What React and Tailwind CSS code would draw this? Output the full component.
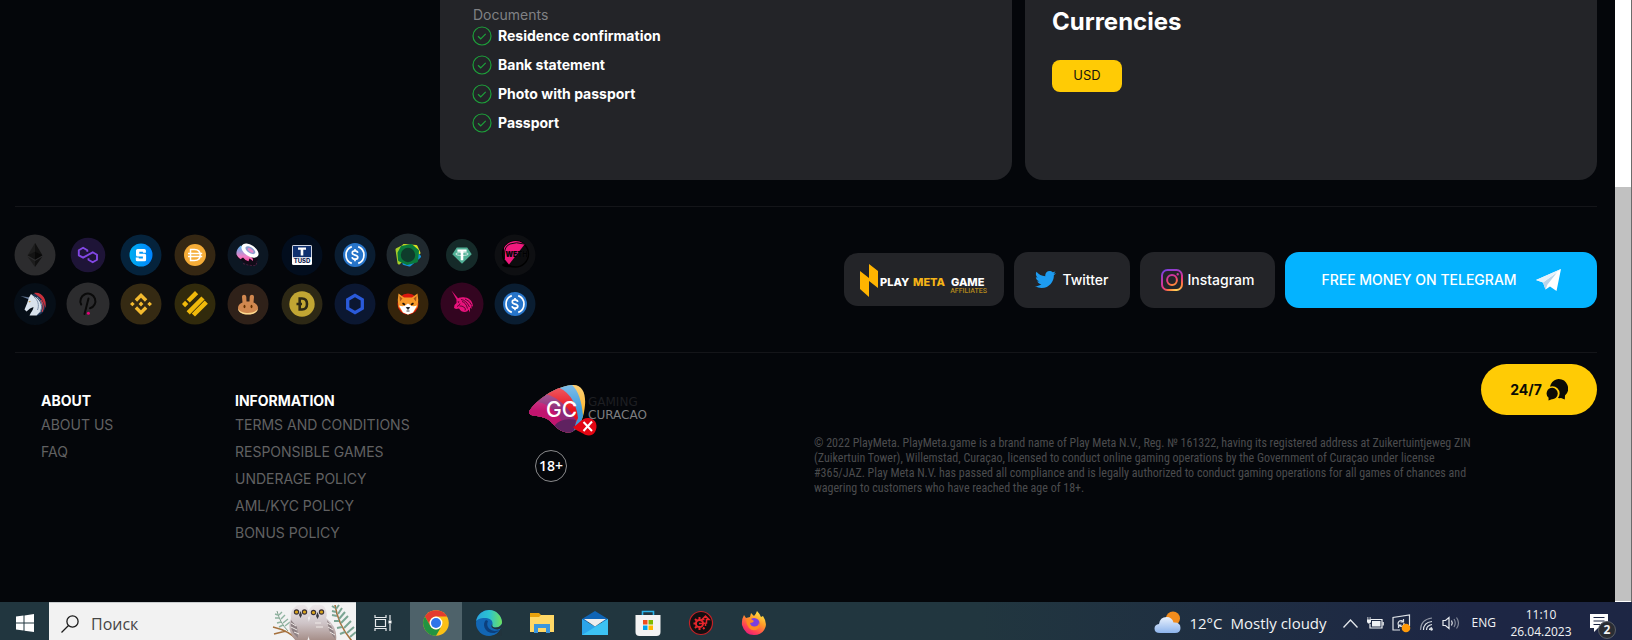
import React from "react";
import { FaTwitter } from "react-icons/fa";

const documents = [
  "Residence confirmation",
  "Bank statement",
  "Photo with passport",
  "Passport",
];

const aboutLinks = ["ABOUT US", "FAQ"];

const infoLinks = [
  "TERMS AND CONDITIONS",
  "RESPONSIBLE GAMES",
  "UNDERAGE POLICY",
  "AML/KYC POLICY",
  "BONUS POLICY",
];

const UsdcMark = () => (
  <g>
    <circle r="12" fill="#2775ca" />
    <g fill="none" stroke="#fff" strokeWidth="1.7">
      <path d="M-3.2-8.4a9 9 0 0 0 0 16.8M3.2-8.4a9 9 0 0 1 0 16.8" />
      <path d="M2.7-2.2C2.5-3.6 1.4-4.1 0-4.1c-1.600 0-2.700.7-2.700 2C-2.700.8 2.800-.6 2.800 2.200c0 1.300-1.200 2-2.800 2s-2.700-.7-2.900-2.100M0-6v2M0 4v2.200" />
    </g>
  </g>
);

// Every mark is drawn around 0,0
const coins = [
  {
    name: "Ethereum",
    bg: "#2c2c2e",
    r: 20.5,
    mark: (
      <g>
        <path d="M0-12 7.300.2 0 4.500-7.300.2Z" fill="#1d1d1d" />
        <path d="M0-12 7.300.2 0 4.500Z" fill="#111" />
        <path d="M0-3.200 7.300.2 0 4.500Z" fill="#080808" />
        <path d="M0-3.200-7.300.2 0 4.500Z" fill="#131313" />
        <path d="M-7.300 1.800 0 6.100V12Z" fill="#1d1d1d" />
        <path d="M7.300 1.800 0 6.100V12Z" fill="#111" />
      </g>
    ),
  },
  {
    name: "Polygon",
    bg: "#1e1437",
    r: 17.3,
    mark: (
      <g fill="none" stroke="#8247e5" strokeWidth="1.900" strokeLinejoin="round">
        <path d="M-.7-3.200V-4.700L-4.900-7.200-9.200-4.700V.3L-4.900 2.700 4.700-2.700 9 -.2V4.800L4.700 7.300.5 4.800V3.200" />
      </g>
    ),
  },
  {
    name: "The Sandbox",
    bg: "#05233c",
    r: 20.5,
    mark: (
      <g>
        <circle r="11.500" fill="url(#sand)" />
        <path
          d="M4.900-2.200H1.900V-3.300H-1.700V-1.300H3.600Q5.100-1.300 5.100.3V4.700Q5.100 6.300 3.500 6.300H-3.600Q-5.200 6.300-5.200 4.700V2.400H-2.200V3.600H1.900V1.500H-3.400Q-5 1.500-5-.1V-4.600Q-5-6.100-3.400-6.100H3.300Q4.900-6.100 4.900-4.600Z"
          fill="#fff"
        />
      </g>
    ),
  },
  {
    name: "Dai",
    bg: "#352713",
    r: 20.5,
    mark: (
      <g>
        <circle r="11" fill="#f5ac37" />
        <path
          d="M-4.500-5.500H-.5Q5.200-5.500 5.200 0T-.5 5.500H-4.500ZM-7-1.500H7.200M-7 1.500H7.200"
          fill="none"
          stroke="#fff"
          strokeWidth="1.500"
        />
      </g>
    ),
  },
  {
    name: "Sushi",
    bg: "#0c1723",
    r: 20.5,
    mark: (
      <g>
        <path
          d="M-10.500-2.500C-8-7 2 0 10 3L8 9.500C5 12 0 10.500-3 8L-11.500 2Z"
          fill="#120b18"
        />
        <path
          d="M-11.500-.5C-12-5-9-8-7-9.500L5 4 5 6 1.500 3.500.5 6.200-2.500 5-5 2.500-7.500 4.200-10 2Z"
          fill="url(#sushi)"
        />
        <ellipse rx="9.600" ry="5.600" cx="2" cy="-4.300" transform="rotate(34 2 -4.300)" fill="#fff" />
        <ellipse rx="5.600" ry="2.900" cx="2.400" cy="-4.800" transform="rotate(34 2.400 -4.800)" fill="#8b9ccf" />
        <ellipse rx="3.300" ry="1.500" cx="2.600" cy="-4.600" transform="rotate(34 2.600 -4.600)" fill="#e889c8" />
        <path d="M-5 8.500Q2 11 8 10.500L9 6" fill="none" stroke="#5d2148" strokeWidth=".8" strokeDasharray="2 1.500" />
      </g>
    ),
  },
  {
    name: "TrueUSD",
    bg: "#020d1d",
    r: 20.5,
    mark: (
      <g>
        <rect x="-10" y="-10" width="20" height="20" rx="1.500" fill="#fff" />
        <path d="M-9.200-9.200H9.200V2.200H-9.200Z" fill="#10316f" />
        <path d="M-4-7.500H4V-5.200H1.300V.6H-1.300V-5.200H-4Z" fill="#fff" />
        <text
          y="8"
          textAnchor="middle"
          className="font-['Inter',sans-serif] text-[6px] font-extrabold"
          fill="#10244f"
        >
          TUSD
        </text>
      </g>
    ),
  },
  { name: "USD Coin", bg: "#0a1d31", r: 20.5, mark: <UsdcMark /> },
  {
    name: "Pax Dollar",
    bg: "#20292f",
    r: 21.5,
    mark: (
      <g strokeLinejoin="round" strokeWidth="3">
        <path d="M-4-9.500 8-8.500 11-2-5-3Z" fill="#d9e021" stroke="#d9e021" />
        <path d="M-11-5.500-4-9-6 5-9 8Z" fill="#a6cf2a" stroke="#a6cf2a" />
        <path d="M11.500 1.500 1.500 10-4 8.500 6-4Z" fill="#1594d8" stroke="#1594d8" />
        <path d="M-6-7.500 3-9.500 9.500-4 8.500 6-1 8.500-8.500 5-9-2Z" fill="#0b7a3c" stroke="#0b7a3c" />
        <circle r="7.200" fill="#0e3c2b" />
      </g>
    ),
  },
  {
    name: "Tether",
    bg: "#152a29",
    r: 16,
    mark: (
      <g>
        <path d="M-5.200-7.500H5.200L9.700-.8 0 8.700-9.700-.8Z" fill="#50af95" />
        <path d="M-4.600-5.600H4.600V-3.200H1.300V5.200H-1.300V-3.200H-4.600Z" fill="#fff" />
        <ellipse cy="-1" rx="6.300" ry="1.500" fill="none" stroke="#fff" strokeWidth=".7" />
      </g>
    ),
  },
  {
    name: "WETH",
    bg: "#0e0f12",
    r: 20.5,
    mark: (
      <g>
        <ellipse cx="-5" cy="10" rx="8" ry="2.300" fill="#000" />
        <circle cx=".5" cy="-1" r="13" fill="#0c0c0e" stroke="#000" strokeWidth="1.400" />
        <path d="M9.500-10.500A13 13 0 0 0-11-7L-10.500 4-6 9.500Z" fill="#f0197d" />
        <path d="M9-11Q1-13.500-5-11T-10.500 0V4" fill="none" stroke="#0a0a0c" strokeWidth="1" />
        <text
          x="1.500"
          y="1.800"
          textAnchor="middle"
          className="font-['Inter',sans-serif] text-[7px] font-black"
          fill="#000"
          stroke="#24242a"
          strokeWidth=".2"
        >
          WETH
        </text>
      </g>
    ),
  },
  {
    name: "1inch",
    bg: "#060e17",
    r: 21,
    mark: (
      <g>
        <path d="M-14.500-8-6-4.500-5-6.500Z" fill="#5f7390" />
        <path d="M-3-9.500C4-13 11-7 10.500 1S5 11.500 1 11.500C7 6 5-3-3-9.500Z" fill="#1d3252" />
        <path d="M-1-11C7-12.500 12-5 10.500 4 9 0 8-5 3-8Z" fill="#c92f3a" />
        <path d="M-6-6.500-4-10-1-7.500C5-5 7.500 1 5.500 7.500L1.500 11.500H-5.500C-4 8-1.500 6-1.500 3L-5 4.500-8.500 7.500-10.500 5.500-8-.5Z" fill="#d9e2ec" />
        <path d="M-1-7C3-4 4.500 1 2.500 6M2-7C7-3 8 2 5 8.500" fill="none" stroke="#8294ad" strokeWidth="1" />
        <path d="M-6.500-3-4-2.500-5.500-1.500Z" fill="#c58b2d" />
        <path d="M6-4Q10 2 7 8" fill="none" stroke="#e6434c" strokeWidth="1" />
      </g>
    ),
  },
  {
    name: "Polkadot",
    bg: "#2c2c2e",
    r: 21.5,
    mark: (
      <g>
        <path
          d="M-6.800.5A7.500 7.500 0 1 1 2 4.300M.5-5.500-3.500 10"
          fill="none"
          stroke="#0a0a0a"
          strokeWidth="2"
          strokeLinecap="round"
        />
        <circle cx=".4" cy="9.300" r="1.500" fill="#e6007a" />
      </g>
    ),
  },
  {
    name: "BNB",
    bg: "#352a13",
    r: 20.5,
    mark: (
      <g fill="#f3ba2f">
        <path d="M0-11 6.300-4.700 3.900-2.300 0-6.200-3.900-2.300-6.300-4.700Z" />
        <path d="M0 11 6.300 4.700 3.900 2.300 0 6.200-3.900 2.300-6.300 4.700Z" />
        <path d="M-8.600-2.300-6.300 0-8.600 2.300-11 0ZM8.600-2.300 11 0 8.600 2.300 6.300 0ZM0-2.400 2.400 0 0 2.400-2.400 0Z" />
      </g>
    ),
  },
  {
    name: "Binance USD",
    bg: "#312a0c",
    r: 20.5,
    mark: (
      <g fill="#f0b90b">
        <path d="M0-13 3.200-9.800-5.200-1.400-8.400-4.600ZM6.400-7.600 9.600-4.400-5.200 10.400-8.400 7.200ZM-9.900-3.200-6.700 0-9.900 3.200-13 0Z" />
        <path d="M9.700-3.500 12.900-.3 0 12.600-3.200 9.400Z" />
      </g>
    ),
  },
  {
    name: "PancakeSwap",
    bg: "#2f2119",
    r: 20.5,
    mark: (
      <g>
        <path
          d="M-6-7C-6-10-2-10-1.700-7L-1.500-2.500H1.500L1.700-7C2-10 6-10 6-7L5.500-1.500C8.500-.5 10 1.500 10 4 10 8 5.500 10.300 0 10.300S-10 8-10 4C-10 1.500-8.500-.5-5.500-1.500Z"
          fill="#d1884f"
        />
        <path d="M-10 4.500C-8 8-4 9-0 9S8 8 10 4.500C9.500 8.500 5.500 10.500 0 10.500S-9.500 8.500-10 4.500Z" fill="#fedc90" />
        <ellipse cx="-3.500" cy="2.500" rx="1" ry="1.700" fill="#633001" />
        <ellipse cx="3.500" cy="2.500" rx="1" ry="1.700" fill="#633001" />
      </g>
    ),
  },
  {
    name: "Dogecoin",
    bg: "#2d2815",
    r: 20.5,
    mark: (
      <g>
        <circle r="12.700" fill="#c2a633" />
        <path d="M-2.300-5.500H0Q5-5.500 5 0T0 5.500H-2.300ZM-5.500 0H0" fill="none" stroke="#2d2815" strokeWidth="2.600" />
      </g>
    ),
  },
  {
    name: "Chainlink",
    bg: "#0b1731",
    r: 20.5,
    mark: (
      <path d="M0-8.600 7.300-4.300V4.300L0 8.600-7.300 4.300V-4.300Z" fill="none" stroke="#2a5ada" strokeWidth="3.300" />
    ),
  },
  {
    name: "Shiba Inu",
    bg: "#35240b",
    r: 20.5,
    mark: (
      <g>
        <circle r="10.500" fill="#d9180f" />
        <path d="M-9.500-10.500-4-6.500H4L9.500-10.500Q11-4 9.500 3L5 8.500 0 10.500-5 8.500-9.500 3Q-11-4-9.500-10.500Z" fill="#f79a2a" />
        <path d="M-8.500-8-5.500-5.500-8-2.500ZM8.500-8 5.500-5.500 8-2.500Z" fill="#a8561a" />
        <path d="M-9 1.500Q-5 3-2.800 1.500L0-.5 2.800 1.500Q5 3 9 1.500L5 8.500 0 10.500-5 8.500Z" fill="#fff" />
        <path d="M-5.500-.8-3 .8M5.500-.8 3 .8" stroke="#1c1008" strokeWidth="1.700" />
        <path d="M-1.600 3.500H1.600L0 5.500ZM-1.500 7H1.500" fill="#111" stroke="#111" strokeWidth=".8" />
      </g>
    ),
  },
  {
    name: "Uniswap",
    bg: "#330520",
    r: 21.5,
    mark: (
      <g>
        <path d="M-10.500-13.500-3-4.500-5-3.500Z" fill="#e8127c" />
        <path
          d="M-5.500-4C-3.500-7 0-7 3-6.500 8-6 11-2 11 3L9.500 1 9.500 5 8 3.500 8 8.500 6.500 5.500Q6 7.500 3 8-1 8-3 4.500L-6 5-8 4-7.500 1-5.500-1Z"
          fill="#e8127c"
        />
        <path
          d="M-1-4.500Q4-4 7.500 3M0-2.500Q4-1.500 5.500 4.500M3-5Q8-3 9.500 1M-2.500 2Q0 1.500 2.500 3.500Q4 5 3 6.500M-5 2.500Q-3 2-2-.5"
          fill="none"
          stroke="#330520"
          strokeWidth=".8"
        />
        <path d="M-4.500-2.500H-2.500L-3.500-1Z" fill="#330520" />
      </g>
    ),
  },
  { name: "USD Coin bridged", bg: "#0a1d31", r: 20.5, mark: <UsdcMark /> },
];

const CheckCircle = () => (
  <svg className="h-5 w-5 shrink-0" viewBox="0 0 20 20" fill="none" stroke="#1da03a">
    <circle cx="10" cy="10" r="9" strokeWidth="1.200" />
    <path d="m6 10.200 2.700 2.600 5-5" strokeWidth="1.200" />
  </svg>
);

const Coins = () => (
  <div className="-ml-[7px] grid w-[534px] grid-cols-10 justify-items-center gap-y-[5px]">
    <svg className="absolute h-0 w-0">
      <defs>
        <linearGradient id="sand" x1="0" x2="1">
          <stop offset="0" stopColor="#00adef" />
          <stop offset="1" stopColor="#0084ff" />
        </linearGradient>
        <linearGradient id="sushi" x1="0" x2="0" y1="0" y2="1">
          <stop offset="0" stopColor="#4fb7f0" />
          <stop offset=".7" stopColor="#f07fc6" />
          <stop offset="1" stopColor="#fa52a0" />
        </linearGradient>
      </defs>
    </svg>
    {coins.map((coin) => (
      <svg key={coin.name} className="h-11 w-11" viewBox="-22 -22 44 44" role="img" aria-label={coin.name}>
        <circle r={coin.r} fill={coin.bg} />
        {coin.mark}
      </svg>
    ))}
  </div>
);

const AffiliatesLogo = () => (
  <svg className="h-[38px] w-32" viewBox="0 0 128 38">
    <path d="M0 10 9 17 9 3 18 10V27L9 20V36L0 28Z" fill="#ffb400" />
    <g className="font-['Inter',sans-serif] text-[11px] font-extrabold">
      <text x="20" y="25" fill="#fff">PLAY</text>
      <text x="53" y="25" fill="#f5b417">META</text>
      <text x="91" y="25" fill="#fff">GAME</text>
    </g>
    <text x="127" y="32" textAnchor="end" fill="#b58a1c" className="font-['Roboto',sans-serif] text-[7px] font-medium">
      AFFILIATES
    </text>
  </svg>
);

const InstagramIcon = () => (
  <svg className="h-[22px] w-[22px]" viewBox="0 0 22 22" fill="none" stroke="url(#insta)" strokeWidth="2">
    <defs>
      <radialGradient id="insta" gradientUnits="userSpaceOnUse" cx="16" cy="22" r="24">
        <stop offset="0" stopColor="#ffdc5c" />
        <stop offset=".35" stopColor="#ff7a3d" />
        <stop offset=".6" stopColor="#e6358a" />
        <stop offset="1" stopColor="#7a3fe0" />
      </radialGradient>
    </defs>
    <rect x="1" y="1" width="20" height="20" rx="5.500" />
    <circle cx="11" cy="11" r="4.900" />
    <circle cx="16.700" cy="5.300" r=".6" strokeWidth="1.200" />
  </svg>
);

const TelegramPlane = () => (
  <svg className="h-6 w-[26px]" viewBox="0 0 26 24">
    <path d="M1 12 26 1 21.500 23 15 18.500 10.500 21.500 8 14.500Z" fill="#fff" />
    <path d="M8 14.500 22 4.500 12.500 16.500 10.500 21.500Z" fill="#b9d4ea" />
    <path d="M1 12 26 1 8 14.500Z" fill="#e6f1fa" />
  </svg>
);

const ChatIcon = () => (
  <svg className="h-[22px] w-[22px]" viewBox="0 0 22 22">
    <path d="M12.500 0A9.500 9.500 0 0 1 19 16.500L18.800 20.500 15 19Q9 20 5 14A9.500 9.500 0 0 1 12.500 0Z" fill="#0b0b05" />
    <circle cx="6.300" cy="14.500" r="7.300" fill="#ffcb05" />
    <path d="M6.300 8.800A5.700 5.700 0 1 1 5.800 20.200L2.500 21.500 2.600 18.800A5.700 5.700 0 0 1 6.300 8.800Z" fill="#0b0b05" />
  </svg>
);

const GamingCuracao = () => (
  <svg className="h-[54px] w-[130px]" viewBox="0 0 130 54" role="img" aria-label="Gaming Curacao">
    <defs>
      <clipPath id="gc">
        <path d="M0 28C3 21 22 3 43 1 53 0 57 9 56 21 55 32 52 43 43 48 34 50 27 44 21 37 13 30 0 34 0 28Z" />
      </clipPath>
      <linearGradient id="shine" x1="0" x2="0" y1="0" y2="1">
        <stop offset="0" stopColor="#fff" stopOpacity=".35" />
        <stop offset=".5" stopColor="#fff" stopOpacity="0" />
      </linearGradient>
    </defs>
    <g clipPath="url(#gc)">
      <path d="M0 0H60V54H0Z" fill="#fdb933" />
      <path d="M0 0H42Q52 8 54 32L48 54H0Z" fill="#3d9bdd" />
      <path d="M0 0H20Q46 6 49 34L40 54H0Z" fill="#e8111c" />
      <path d="M0 10H17Q34 15 47 36L42 54H0Z" fill="#8e2a77" />
      <path d="M0 18H9Q30 22 40 54H0Z" fill="#c2146f" />
      <path d="M25 42Q32 33 47 36L44 54H26Z" fill="#5f2260" />
      <path d="M0 0H60V54H0Z" fill="url(#shine)" />
    </g>
    <path d="M44 43C50 40 53 33 60 34 68 35 69 43 66 48 62 54 56 51 53 49 50 47 46 46 44 43Z" fill="#e30613" />
    <path d="m54.500 38 8.500 9M63 37.500 54.500 47" stroke="#fff" strokeWidth="2" fill="none" />
    <text x="17" y="33" fill="#fff" className="font-['Inter',sans-serif] text-[21px] font-medium">GC</text>
    <g className="font-['DejaVu_Sans',sans-serif] text-xs">
      <text x="59" y="22" fill="#1e1f22">GAMING</text>
      <text x="59" y="35" fill="#7d7e80">CURACAO</text>
    </g>
  </svg>
);

const FooterColumn = ({ title, links, className }) => (
  <div className={className}>
    <h3 className="text-sm leading-5 font-bold text-white">{title}</h3>
    <ul>
      {links.map((link) => (
        <li key={link} className="flex h-[27px] items-center">
          <a href="#" className="text-sm leading-5 text-[#616162] hover:text-white">
            {link}
          </a>
        </li>
      ))}
    </ul>
  </div>
);

const Owls = () => (
  <svg className="h-[38px] w-[84px] self-start" viewBox="0 0 84 38">
    <defs>
      <linearGradient id="owl" x1="0" x2="0" y1="0" y2="1">
        <stop offset="0" stopColor="#ece8ea" />
        <stop offset=".5" stopColor="#cfc5c8" />
        <stop offset="1" stopColor="#a48c86" />
      </linearGradient>
    </defs>
    <path d="M1 24Q18 28 26 38M2 31 14 28" stroke="#a5713d" strokeWidth="1.600" fill="none" />
    <path d="M5 8Q8 20 16 28" stroke="#7f9f8b" fill="none" />
    <path
      d="M6 12 3 11M7 15 3 15M9 19 5 20M11 22 7 24M7 12 10 9M9 16 13 12M11 20 16 16M13 23 18 19"
      stroke="#8fb3a0"
      strokeWidth="1.400"
    />
    <path d="M22 5Q25 1 29 2 34 1 36 6 39 11 36 15 40 28 35 38H24Q14 27 19 15 18 8 22 5Z" fill="url(#owl)" />
    <path d="M38 5Q41 1 45 2 51 1 53 5 56 11 54 15 66 24 64 38H38Q33 26 38 15 35 9 38 5Z" fill="url(#owl)" />
    <path d="M19 17Q17 28 26 35L25 24ZM55 17Q62 25 63 36L57 27Z" fill="#8d8083" />
    <path d="M19 20 24 23M19 24 25 27M22 29 27 31M55 20 59 22M56 24 61 27M58 29 63 32M43 20H49M44 24H51" stroke="#efe9e6" />
    <g fill="#3b3136">
      <circle cx="24.500" cy="9" r="2.700" />
      <circle cx="32.500" cy="9" r="2.700" />
      <circle cx="41.500" cy="9.500" r="2.700" />
      <circle cx="49.500" cy="9" r="2.700" />
    </g>
    <g fill="#d9a51c">
      <circle cx="24.500" cy="9" r="1.600" />
      <circle cx="32.500" cy="9" r="1.600" />
      <circle cx="41.500" cy="9.500" r="1.600" />
      <circle cx="49.500" cy="9" r="1.600" />
    </g>
    <path d="m28.500 8-1.500 4 1.500 3 1.500-3ZM45.500 9l-1.500 4 1.500 3 1.500-3Z" fill="#3a3a42" />
    <path d="M63 2Q66 22 80 38" stroke="#a5713d" strokeWidth="1.600" fill="none" />
    <path
      d="M63 5 60 3M64 9 60 8M65 13 60 12M67 18 62 18M70 24 65 25M73 29 68 31M64 6 67 2M66 11 70 5M67 16 73 9M69 20 76 13M72 25 79 18M75 30 82 24M78 34 84 29"
      stroke="#7ba593"
      strokeWidth="2"
    />
  </svg>
);

const taskbarApps = [
  {
    name: "Microsoft Edge",
    icon: (
      <svg className="h-[26px] w-[26px]" viewBox="0 0 26 26">
        <defs>
          <linearGradient id="edgeTop" x1="0" x2="1">
            <stop offset="0" stopColor="#2aa5dd" />
            <stop offset=".5" stopColor="#2bc3d2" />
            <stop offset="1" stopColor="#6fe05c" />
          </linearGradient>
        </defs>
        <circle cx="13" cy="13" r="13" fill="#1266b4" />
        <path d="M.2 11A13 13 0 0 1 26 12C26 16 22 18 18.500 17.500 15 17 15.500 15.500 16.500 13.500 17 9.500 12 7.500 7 8 3 8.500 1 10 .2 11Z" fill="url(#edgeTop)" />
        <path d="M10 10Q7 13 8.500 17.500 11 23.500 18.500 23 22 22 23.500 20 17 22.500 13 18.500 10 15 12 11Z" fill="#0c3f7c" />
        <path d="M16.500 13.500Q13.500 17.500 18.500 19T26 17V14Q23 18 18.500 17.500 15.500 17 16.500 13.500Z" fill="#22343d" />
        <path d="M25 18Q22 25 15 26L23 26H26Z" fill="#22343d" />
      </svg>
    ),
  },
  {
    name: "File Explorer",
    icon: (
      <svg className="h-[26px] w-[26px]" viewBox="0 0 26 26">
        <path d="M1 3H10L12 5H25V21H1Z" fill="#e8a20c" />
        <path d="M1 7H10L12 5H25V22H1Z" fill="#ffd866" />
        <path d="M5 14H21V23H17V18H9V23H5Z" fill="#3a96dd" />
      </svg>
    ),
  },
  {
    name: "Mail",
    icon: (
      <svg className="h-[26px] w-[26px]" viewBox="0 0 26 26">
        <path d="M0 9 13 1 26 9V12H0Z" fill="#0f64b5" />
        <path d="M0 9 13 16.500 26 9V25H0Z" fill="#2ba5ea" />
        <path d="M26 9V25H0Z" fill="#3cc3f4" />
        <path d="M2 9H24L13 16.500Z" fill="#eee" />
      </svg>
    ),
  },
  {
    name: "Microsoft Store",
    icon: (
      <svg className="h-[26px] w-[26px]" viewBox="0 0 26 26">
        <path d="M7.500 6V1.500H18.500V6" fill="none" stroke="#2bb4ea" strokeWidth="1.600" />
        <path d="M0.500 5H25.500V22Q25.500 26 21.500 26H4.500Q.5 26 .5 22Z" fill="#f3f3f3" />
        <path d="M8 10H12.500V14.500H8Z" fill="#f04e1f" />
        <path d="M13.500 10H18V14.500H13.500Z" fill="#7eba00" />
        <path d="M8 15.500H12.500V20H8Z" fill="#00a3ee" />
        <path d="M13.500 15.500H18V20H13.500Z" fill="#ffb800" />
      </svg>
    ),
  },
  {
    name: "Control Center",
    icon: (
      <svg className="h-[26px] w-[26px]" viewBox="0 0 26 26">
        <circle cx="13" cy="13" r="11.500" fill="#120f11" stroke="#c32227" strokeWidth="1.200" />
        <circle cx="11.500" cy="13.500" r="3.600" fill="none" stroke="#e8262c" strokeWidth="2" />
        <path
          d="M11.500 7V9.500M11.500 17.500V20M5.500 13.500H7.500M7 9 8.600 10.500M7 18 8.600 16.500M15 17.500 16.500 19"
          stroke="#e8262c"
          strokeWidth="2"
        />
        <path d="M11 13.500H14L18.500 13V9.500H21L17.500 6 14 9.500H16.500M17.500 13V16" fill="none" stroke="#e8262c" strokeWidth="1.500" />
      </svg>
    ),
  },
  {
    name: "Firefox",
    icon: (
      <svg className="h-[26px] w-[26px]" viewBox="0 0 26 26">
        <defs>
          <linearGradient id="fox" x1=".8" x2=".2" y1="0" y2="1">
            <stop offset="0" stopColor="#fff14a" />
            <stop offset=".4" stopColor="#ff9a28" />
            <stop offset=".75" stopColor="#ff4055" />
            <stop offset="1" stopColor="#e11586" />
          </linearGradient>
        </defs>
        <path d="M3 5 5 8 9 7 10 3 13 6Q15 4 16 1 19 4 20 7L22 6Q26 12 24.500 17 22 25 13 25T1 15Q.500 9 3 5Z" fill="url(#fox)" />
        <circle cx="13" cy="13.500" r="5.600" fill="#7a3fe0" />
        <path d="M5 9 10 9 13 11Q12 13 9 13 10 17 14 16.500 18 16 18 12 20 16 17 19 12 22 8 18 5 14 5 9Z" fill="#ff8a20" />
      </svg>
    ),
  },
];

const ChromeIcon = () => (
  <svg className="h-[26px] w-[26px]" viewBox="-13 -13 26 26">
    <circle r="12.800" fill="#fbc016" />
    <path d="M-11.100-6.400A12.800 12.800 0 0 1 11.100-6.400H0A6.400 6.400 0 0 0-5.500 3.200Z" fill="#e33b2e" />
    <path d="M-11.100-6.400A12.800 12.800 0 0 0 0 12.800L5.500 3.200A6.400 6.400 0 0 1-5.500 3.200Z" fill="#229342" />
    <circle r="6.400" fill="#fff" />
    <circle r="5" fill="#2f74e8" />
  </svg>
);

const Taskbar = () => (
  <footer className="flex h-[38px] shrink-0 items-center overflow-hidden bg-linear-to-r from-[#21363f] from-60% to-[#1d2644] to-90% font-['Open_Sans','Noto_Sans',sans-serif] text-[#f1f3f5]">
    <button aria-label="Start" className="flex h-full w-[49px] items-center justify-center">
      <svg className="mt-1 h-[18px] w-[18px]" viewBox="0 0 18 18" fill="#fff">
        <path d="M0 2.600 7.500 1.500V8.600H0ZM8.500 1.400 18 0V8.600H8.500ZM0 9.500H7.500V16.500L0 15.500ZM8.500 9.500H18V18L8.500 16.700Z" />
      </svg>
    </button>
    <label className="flex h-full w-[307px] items-center border-t border-[#c9cdcf] bg-[#f2f2f2] pl-3">
      <svg className="mt-1 h-[18px] w-[18px]" viewBox="0 0 18 18" fill="none" stroke="#1c1c1c" strokeWidth="1.300">
        <circle cx="11.500" cy="6.500" r="5.600" />
        <path d="M7.500 10.500.5 17.500" />
      </svg>
      <input
        type="text"
        aria-label="Поиск"
        placeholder="Поиск"
        className="mt-1 ml-3 w-0 flex-1 bg-transparent text-base text-black outline-none placeholder:text-[#454545]"
      />
      <Owls />
    </label>
    <button aria-label="Task view" className="flex h-full w-[54px] items-center justify-center">
      <svg className="mt-1 h-[18px] w-[18px]" viewBox="0 0 18 18" fill="none" stroke="#e6eaec" strokeWidth="1.200">
        <path d="M1 1V3.500H12V1M1 17V14.500H12V17M1.500 5.500H11.500V12.500H1.500ZM16 1V6M16 10V17" />
        <path d="M14.500 6.500H17.500V9.500H14.500Z" fill="#fff" stroke="none" />
      </svg>
    </button>
    <button aria-label="Google Chrome" className="flex h-full w-[52px] items-center justify-center bg-[#4e626a] pt-1">
      <ChromeIcon />
    </button>
    {taskbarApps.map((app) => (
      <button key={app.name} aria-label={app.name} className="flex h-full w-[53px] items-center justify-center pt-1">
        {app.icon}
      </button>
    ))}
    <div className="ml-auto flex h-full items-center pt-1">
      <svg className="h-6 w-[27px]" viewBox="0 0 27 24">
        <defs>
          <linearGradient id="cloud" x1="0" x2="0" y1="0" y2="1">
            <stop offset="0" stopColor="#e9f1fd" />
            <stop offset="1" stopColor="#8db4ec" />
          </linearGradient>
        </defs>
        <circle cx="19" cy="7.500" r="7" fill="#f28c1c" />
        <path d="M6 22Q.500 22 .500 17.500 .500 13.500 5 13 6 6 12.500 6 18 6 19.500 11.500 26.500 11 26.500 17 26.500 22 21 22Z" fill="url(#cloud)" />
      </svg>
      <span className="ml-2 text-[15px] leading-5">12°C</span>
      <span className="ml-2 text-[15px] leading-5">Mostly cloudy</span>
      <svg className="ml-4 h-[9px] w-[15px]" viewBox="0 0 15 9" fill="none" stroke="#e4e8ec" strokeWidth="1.300">
        <path d="M.5 8.500 7.500 1 14.500 8.500" />
      </svg>
      <svg className="ml-2 h-3 w-[18px]" viewBox="0 0 18 12">
        <path d="M4.500 2.500H16V11H4V7" fill="none" stroke="#eef1f4" strokeWidth="1.200" />
        <path d="M6 4H14.500V9.500H6ZM16.500 5H17.800V8.500H16.500ZM1 2.500H5V5L4 6.500H2L1 5ZM1.500 0H2.300V2.500H1.500ZM3.700 0H4.500V2.500H3.700Z" fill="#eef1f4" />
      </svg>
      <svg className="ml-2 h-[19px] w-[19px]" viewBox="0 0 19 19" fill="none" stroke="#dfe3e8" strokeWidth="1.200">
        <path d="M8 16H1V3.500L17.500 1V12" />
        <path d="M6 10.500Q6 6.500 9.500 6.500L11.500 7.500M11.500 5V8H8.500M12 9Q12 12.500 9 12.500L6.500 11.500M6.500 14V11.200H9.500" />
        <circle cx="14" cy="14" r="4.300" fill="#ff9a0a" stroke="none" />
      </svg>
      <svg className="ml-2 h-[15px] w-[15px]" viewBox="0 0 15 15" fill="none" stroke="#dfe3e8" strokeWidth="1.200">
        <path d="M10.500 14Q10.500 12 13 11.500M7.500 14Q7.500 9.500 13 8.500M4.500 14Q4.500 6.500 13 5.500" />
        <path d="M1.500 14Q1.500 3.500 13 2" opacity=".6" />
        <circle cx="12.500" cy="13.300" r=".8" fill="#fff" />
      </svg>
      <svg className="ml-2 h-[14px] w-[18px]" viewBox="0 0 18 14" fill="none" stroke="#e8ebef" strokeWidth="1.200">
        <path d="M1 4.500H3.500L7 1.500V12.500L3.500 9.500H1ZM9.500 4.500Q11 7 9.500 9.500" />
        <path d="M12 3Q14.500 7 12 11M14.500 1.500Q18.500 7 14.500 12.500" opacity=".5" />
      </svg>
      <span className="ml-3 text-xs leading-5">ENG</span>
      <div className="ml-3 flex w-[66px] flex-col items-center text-xs leading-[17px]">
        <span>11:10</span>
        <span>26.04.2023</span>
      </div>
      <div className="relative mr-6 ml-4 h-5 w-[18px]">
        <svg className="h-5 w-[18px]" viewBox="0 0 18 20">
          <path d="M0 1H18V15H8L4 19V15H0Z" fill="#fff" />
          <path d="M3.500 4.500H14.500M3.500 8H14.500M3.500 11.500H10" stroke="#1d2644" strokeWidth="1.200" />
        </svg>
        <span className="absolute top-2 left-2 flex h-[18px] w-[18px] items-center justify-center rounded-full border border-[#5b6068] bg-[#2a2d33] text-xs font-bold">
          2
        </span>
      </div>
    </div>
  </footer>
);

const App = () => {
  return (
    <div className="flex h-screen flex-col overflow-hidden bg-[#04060a]">
      <div className="flex min-h-0 flex-1">
        <main className="min-w-0 flex-1 overflow-hidden pr-[18px] pl-[15px] font-['Inter',sans-serif] text-white">
          {/* Cards */}
          <section className="grid grid-cols-2 gap-[13px] pl-[425px]">
            <div className="h-[180px] rounded-b-[18px] bg-[#232428] pt-1 pl-8">
              <p className="pl-px text-sm leading-[22px] text-[#808184]">Documents</p>
              <ul>
                {documents.map((item) => (
                  <li key={item} className="mb-[9px] flex h-5 items-center gap-[6px]">
                    <CheckCircle />
                    <span className="text-sm leading-5 font-bold">{item}</span>
                  </li>
                ))}
              </ul>
            </div>
            <div className="h-[180px] rounded-b-[18px] bg-[#232428] pt-[6px] pl-[27px]">
              <h2 className="text-2xl leading-8 font-bold">Currencies</h2>
              <button className="mt-[22px] h-8 w-[70px] rounded-lg bg-[#ffcb05] text-[13px] text-[#16160f]">
                USD
              </button>
            </div>
          </section>

          {/* Coins and social links */}
          <section className="mt-[26px] flex h-[147px] items-center justify-between border-y border-[#141519]">
            <Coins />
            <div className="flex items-center gap-[10px]">
              <a href="#" className="flex h-[53px] w-40 items-center justify-center rounded-[14px] bg-[#232428]">
                <AffiliatesLogo />
              </a>
              <a href="#" className="flex h-14 w-[116px] items-center justify-center gap-[6px] rounded-[14px] bg-[#232428]">
                <FaTwitter className="h-[21px] w-[21px] text-[#1d9bf0]" />
                <span className="text-sm leading-5 font-medium">Twitter</span>
              </a>
              <a href="#" className="flex h-14 w-[135px] items-center justify-center gap-[5px] rounded-[14px] bg-[#232428]">
                <InstagramIcon />
                <span className="text-sm leading-5 font-medium">Instagram</span>
              </a>
              <a href="#" className="flex h-14 w-[312px] items-center justify-center gap-[18px] rounded-[14px] bg-[#04b3ff]">
                <span className="text-sm leading-5 font-medium">FREE MONEY ON TELEGRAM</span>
                <TelegramPlane />
              </a>
            </div>
          </section>

          {/* Footer */}
          <section className="flex pl-[26px]">
            <FooterColumn className="w-[194px] pt-[38px]" title="ABOUT" links={aboutLinks} />
            <FooterColumn className="w-[294px] pt-[38px]" title="INFORMATION" links={infoLinks} />
            <div className="w-[285px] pt-[31px]">
              <GamingCuracao />
              <div className="mt-3 ml-[6px] flex h-8 w-8 items-center justify-center rounded-full border border-[#8a8a8c] font-['Open_Sans',sans-serif] text-sm font-semibold">
                18+
              </div>
            </div>
            <div className="flex flex-1 flex-col items-end pt-[11px]">
              <button className="flex h-[51px] w-[116px] items-center justify-center gap-1 rounded-full bg-[#ffcb05] text-sm font-bold text-[#0b0b05]">
                24/7
                <ChatIcon />
              </button>
              <p className="mt-[21px] w-full text-xs leading-[15px] font-['Liberation_Sans_Narrow','Roboto_Condensed','Lato',sans-serif] text-[#4b4c4e]">
                © 2022 PlayMeta. PlayMeta.game is a brand name of Play Meta N.V., Reg. № 161322, having its registered address at Zuikertuintjeweg ZIN
                <br />
                (Zuikertuin Tower), Willemstad, Curaçao, licensed to conduct online gaming operations by the Government of Curaçao under license
                <br />
                #365/JAZ. Play Meta N.V. has passed all compliance and is legally authorized to conduct gaming operations for all games of chances and
                <br />
                wagering to customers who have reached the age of 18+.
              </p>
            </div>
          </section>
        </main>

        {/* Scrollbar */}
        <div className="flex w-[17px] flex-col border-r border-[#6b6b6b] bg-white">
          <div className="mt-[187px] mb-px flex-1 bg-[#c1c1c1]" />
        </div>
      </div>
      <Taskbar />
    </div>
  );
};

export default App;
